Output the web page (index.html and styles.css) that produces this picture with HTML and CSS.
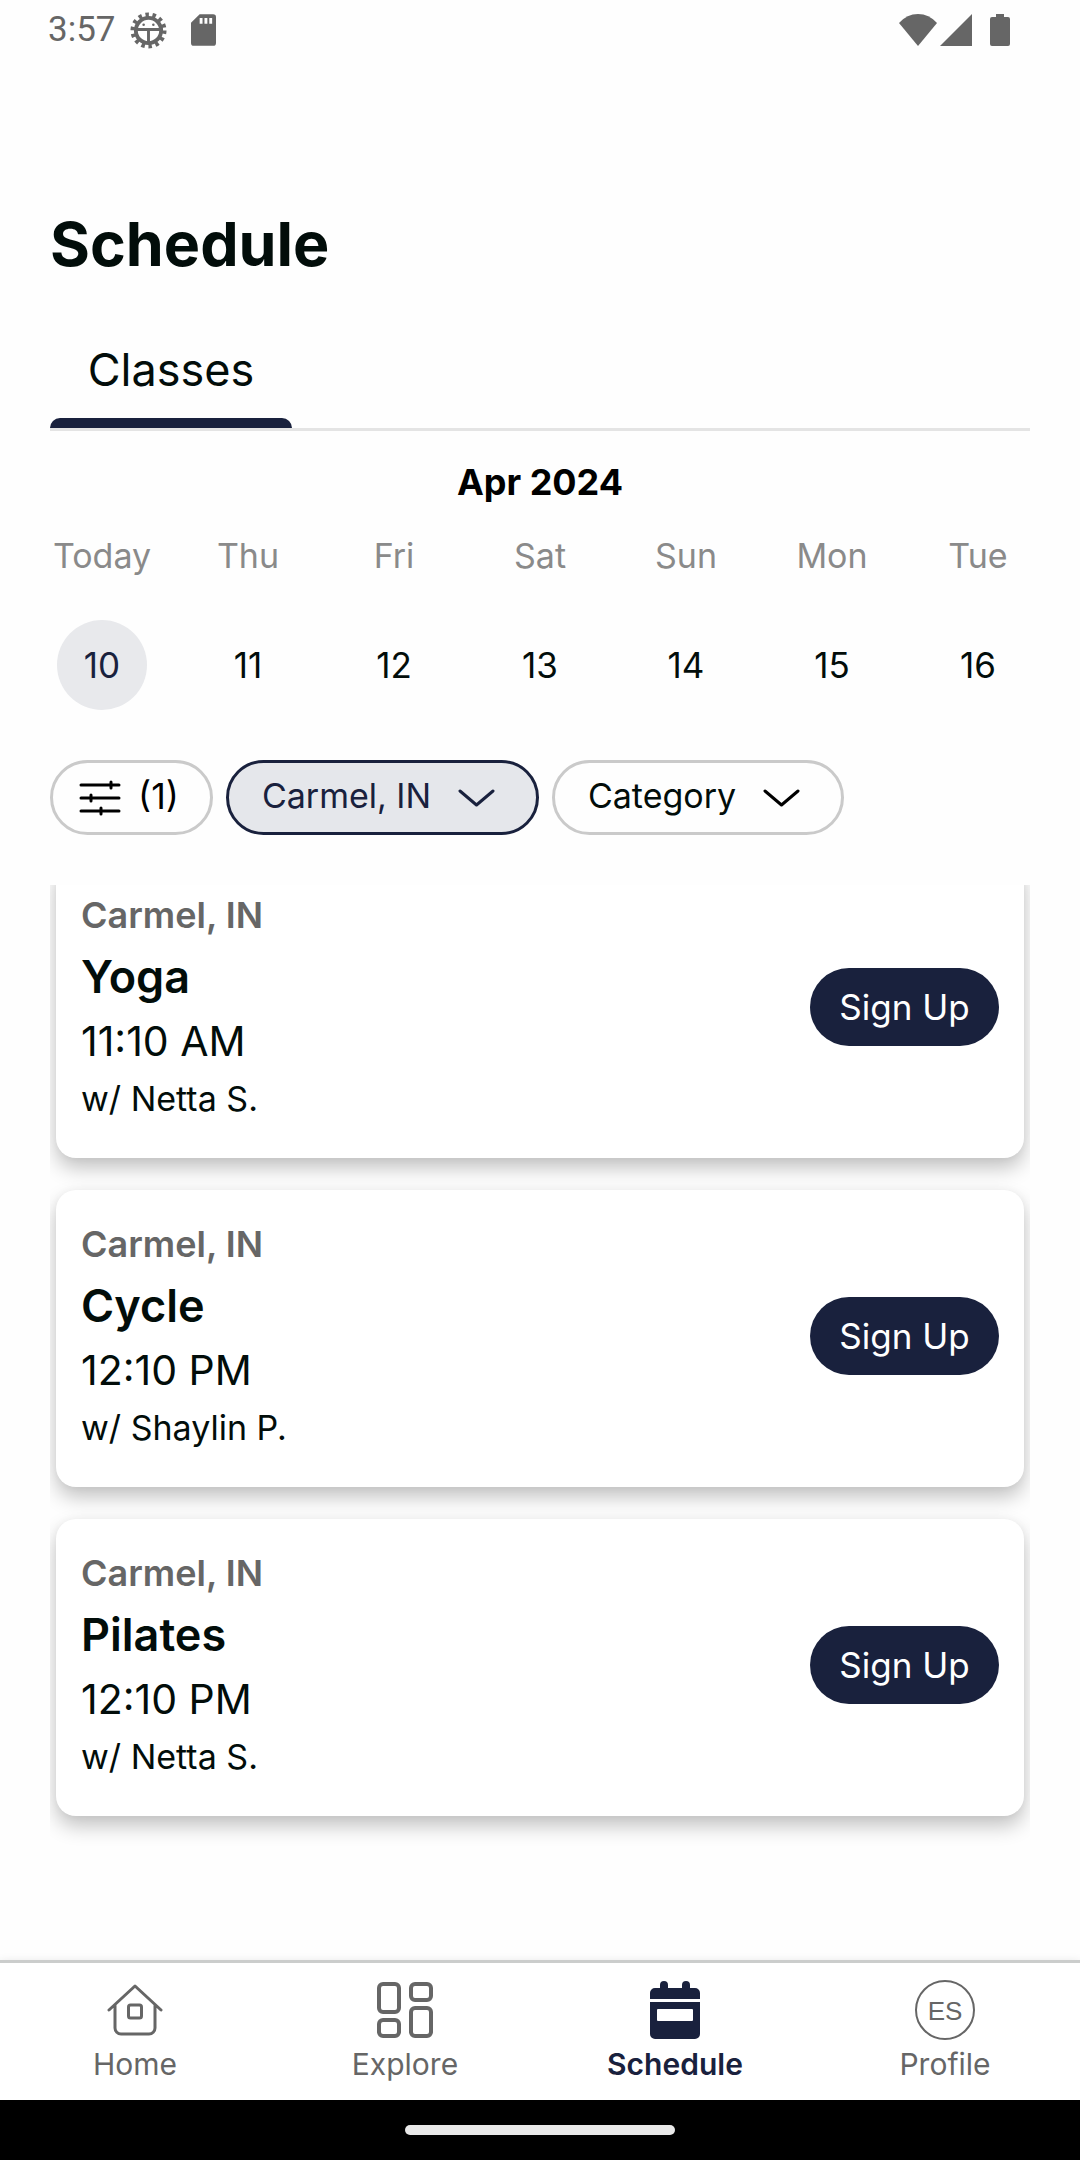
FILE: index.html
```html
<!DOCTYPE html>
<html lang="en">
<head>
    <meta charset="UTF-8">
    <meta name="viewport" content="width=device-width, initial-scale=1.0">
    <title>Schedule</title>
    <link rel="stylesheet" href="styles.css">
</head>
<body>
    <!-- Status bar -->
    <div class="status-bar">
        <span class="clock">3:57</span>
        <svg class="gear" viewBox="0 0 38 38" width="37" height="37">
            <circle cx="19" cy="19" r="13" fill="none" stroke="#666" stroke-width="4"/>
            <circle cx="19" cy="19" r="16" fill="none" stroke="#666" stroke-width="5" stroke-dasharray="3.500 3.680"/>
            <path d="M6 18h26M19 18v13" stroke="#666" stroke-width="3"/>
            <circle cx="14" cy="13" r="1.300" fill="#666"/>
            <circle cx="24" cy="13" r="1.300" fill="#666"/>
        </svg>
        <svg class="sd-card" viewBox="0 0 26 33" width="25" height="32">
            <path fill="#666" fill-rule="evenodd" d="M9 0h14a3 3 0 0 1 3 3v27a3 3 0 0 1-3 3H3a3 3 0 0 1-3-3V9zM9 4v6h3V4zM14 4v6h3V4zM19 4v6h3V4z"/>
        </svg>
        <div class="signals">
            <svg viewBox="0 0 40 32" width="40" height="32"><path fill="#666" d="M20 32 1 9Q9 0 20 0t19 9z"/></svg>
            <svg viewBox="0 0 32 32" width="32" height="32"><path fill="#666" d="M32 0v32H0z"/></svg>
            <svg class="battery" viewBox="0 0 20 32" width="20" height="32"><path fill="#666" d="M6 0h8v3h4a2 2 0 0 1 2 2v25a2 2 0 0 1-2 2H2a2 2 0 0 1-2-2V5a2 2 0 0 1 2-2h4z"/></svg>
        </div>
    </div>

    <main class="content">
        <h1>Schedule</h1>
        <div class="tabs">
            <button class="tab">Classes</button>
        </div>

        <!-- Week picker -->
        <h2 class="month">Apr 2024</h2>
        <div class="week">
            <button class="day selected"><span class="name">Today</span><span class="date">10</span></button>
            <button class="day"><span class="name">Thu</span><span class="date">11</span></button>
            <button class="day"><span class="name">Fri</span><span class="date">12</span></button>
            <button class="day"><span class="name">Sat</span><span class="date">13</span></button>
            <button class="day"><span class="name">Sun</span><span class="date">14</span></button>
            <button class="day"><span class="name">Mon</span><span class="date">15</span></button>
            <button class="day"><span class="name">Tue</span><span class="date">16</span></button>
        </div>

        <!-- Filters -->
        <div class="filters">
            <button class="chip filter-btn">
                <svg viewBox="0 0 42 36" width="42" height="36" fill="none" stroke="#000" stroke-width="3" stroke-linecap="round">
                    <path d="M2 5h38M2 18h38M2 31h38M32 2v6M12 15v6M22 28v6"/>
                </svg>
                <span class="count">(1)</span>
            </button>
            <label class="chip active">
                <select aria-label="Location"><option>Carmel, IN</option></select>
                <svg viewBox="0 0 37 18" width="37" height="18" fill="none" stroke="#19213d" stroke-width="3" stroke-linecap="round" stroke-linejoin="round"><path d="M2 2l16.500 14L35 2"/></svg>
            </label>
            <label class="chip">
                <select aria-label="Category"><option>Category</option></select>
                <svg viewBox="0 0 37 18" width="37" height="18" fill="none" stroke="#000" stroke-width="3" stroke-linecap="round" stroke-linejoin="round"><path d="M2 2l16.500 14L35 2"/></svg>
            </label>
        </div>

        <!-- Class list -->
        <div class="list-window">
            <div class="class-list">
                <div class="class-card">
                    <div class="info">
                        <p class="place">Carmel, IN</p>
                        <h3>Yoga</h3>
                        <p class="time">11:10 AM</p>
                        <p class="teacher">w/ Netta S.</p>
                    </div>
                    <button class="sign-up">Sign Up</button>
                </div>
                <div class="class-card">
                    <div class="info">
                        <p class="place">Carmel, IN</p>
                        <h3>Cycle</h3>
                        <p class="time">12:10 PM</p>
                        <p class="teacher">w/ Shaylin P.</p>
                    </div>
                    <button class="sign-up">Sign Up</button>
                </div>
                <div class="class-card">
                    <div class="info">
                        <p class="place">Carmel, IN</p>
                        <h3>Pilates</h3>
                        <p class="time">12:10 PM</p>
                        <p class="teacher">w/ Netta S.</p>
                    </div>
                    <button class="sign-up">Sign Up</button>
                </div>
            </div>
        </div>
    </main>

    <!-- Bottom navigation -->
    <nav class="bottom-nav">
        <a href="#">
            <svg viewBox="0 0 60 60" width="60" height="60" fill="none" stroke="#666" stroke-width="3" stroke-linecap="round" stroke-linejoin="round">
                <path d="M4 30 30 6l26 24M10 25v23a6 6 0 0 0 6 6h28a6 6 0 0 0 6-6V25"/>
                <rect x="23.500" y="25" width="13" height="13" rx="2"/>
            </svg>
            Home
        </a>
        <a href="#">
            <svg viewBox="0 0 60 60" width="60" height="60" fill="none" stroke="#666" stroke-width="4">
                <rect x="4" y="4" width="20" height="28" rx="4"/>
                <rect x="36" y="4" width="20" height="16" rx="4"/>
                <rect x="4" y="40" width="20" height="16" rx="4"/>
                <rect x="36" y="28" width="20" height="28" rx="4"/>
            </svg>
            Explore
        </a>
        <a href="#" class="current">
            <svg viewBox="0 0 60 60" width="60" height="60" fill="#19213d">
                <path d="M5 19v-6a5 5 0 0 1 5-5h5V5a4 4 0 0 1 8 0v3h14V5a4 4 0 0 1 8 0v3h5a5 5 0 0 1 5 5v6z"/>
                <path fill-rule="evenodd" d="M5 22h50v32a5 5 0 0 1-5 5H10a5 5 0 0 1-5-5zM13 29q-1 0-1 1v10q0 1 1 1h34q1 0 1-1v-10q0-1-1-1z"/>
            </svg>
            Schedule
        </a>
        <a href="#">
            <span class="avatar">ES</span>
            Profile
        </a>
    </nav>
    <div class="home-bar"><span class="handle"></span></div>
</body>
</html>
```

FILE: styles.css
```css
* {
    box-sizing: border-box;
}
body {
    display: flex;
    flex-direction: column;
    min-height: 100vh;
    margin: 0;
    background-color: #fefefe;
    color: #020d0a;
    font-family: Inter, 'Liberation Sans', sans-serif;
    font-size: 34px;
    line-height: 44px;
}
h1, h2, h3, p {
    margin: 0;
}
button, select {
    padding: 0;
    border: none;
    background: none;
    color: inherit;
    font: inherit;
    cursor: pointer;
}
svg {
    display: block;
    flex-shrink: 0;
}

/* Status bar */
.status-bar {
    display: flex;
    align-items: center;
    height: 60px;
    padding: 0 70px 0 48px;
    color: #666;
    font-family: Roboto, sans-serif;
    font-size: 35px;
}
.gear {
    margin-left: 14px;
}
.sd-card {
    margin-left: 24px;
}
.signals {
    display: flex;
    gap: 2px;
    margin-left: auto;
}
.battery {
    margin-left: 16px;
}

/* Main content */
.content {
    flex: 1;
    padding: 148px 50px 0;
}
h1 {
    font-size: 61px;
    line-height: 72px;
    font-weight: 700;
}
.tabs {
    margin-top: 60px;
    border-bottom: 3px solid #e4e4e4;
}
.tab {
    display: block;
    position: relative;
    width: 242px;
    height: 88px;
    padding-bottom: 28px;
    font-size: 45px;
    line-height: 60px;
}
.tab::after {
    content: "";
    position: absolute;
    left: 0;
    right: 0;
    bottom: 0;
    height: 10px;
    border-radius: 10px 10px 0 0;
    background-color: #19213d;
}

/* Week picker */
.month {
    margin-top: 29px;
    color: #000;
    font-size: 36px;
    font-weight: 700;
    line-height: 44px;
    text-align: center;
}
.week {
    display: flex;
    justify-content: space-between;
    margin-top: 30px;
}
.day {
    display: flex;
    flex-direction: column;
    align-items: center;
    gap: 42px;
    width: 104px;
}
.name {
    color: #8a8a8a;
}
.date {
    display: flex;
    align-items: center;
    justify-content: center;
    width: 90px;
    height: 90px;
    border-radius: 50%;
    font-size: 35px;
}
.selected .date {
    background-color: #e8e9ec;
    color: #19213d;
}

/* Filters */
.filters {
    display: flex;
    gap: 13px;
    margin-top: 50px;
}
.chip {
    display: flex;
    align-items: center;
    gap: 26px;
    height: 75px;
    padding: 0 41px 0 33px;
    border: 3px solid #cacaca;
    border-radius: 38px;
}
.chip select,
.count {
    appearance: none;
    outline: none;
    height: 44px;
    padding-bottom: 4px;
    line-height: 40px;
}
.chip.filter-btn {
    gap: 17px;
    padding: 0 31px 0 26px;
    border: 3px solid #cacaca;
    color: #000;
    font-size: 36px;
}
.chip.active {
    border-color: #19213d;
    background-color: #e5e7eb;
    color: #19213d;
}

/* Class list */
.list-window {
    margin-top: 50px;
    overflow: hidden;
}
.class-list {
    display: flex;
    flex-direction: column;
    gap: 32px;
    margin-top: -24px;
    padding: 0 6px 50px;
}
.class-card {
    display: flex;
    align-items: center;
    justify-content: space-between;
    padding: 32px 25px 37px;
    border-radius: 20px;
    background-color: #fff;
    box-shadow: 0 10px 20px rgba(0, 0, 0, 0.24), 0 0 8px rgba(0, 0, 0, 0.04);
}
.info {
    display: flex;
    flex-direction: column;
    gap: 12px;
}
.place {
    color: #666;
    font-size: 36px;
    font-weight: 600;
}
.info h3 {
    font-size: 45px;
    line-height: 56px;
    font-weight: 600;
}
.time {
    font-size: 41px;
    line-height: 48px;
}
.sign-up {
    width: 189px;
    height: 78px;
    border-radius: 39px;
    background-color: #19213d;
    color: #fff;
    font-size: 35px;
}

/* Bottom navigation */
.bottom-nav {
    display: grid;
    grid-template-columns: repeat(4, 1fr);
    height: 140px;
    padding-top: 17px;
    border-top: 3px solid #cbcdcc;
    background-color: #fff;
    box-shadow: 0 0 8px rgba(0, 0, 0, 0.08);
}
.bottom-nav a {
    display: flex;
    flex-direction: column;
    align-items: center;
    gap: 6px;
    color: #666;
    font-size: 30px;
    line-height: 36px;
    text-decoration: none;
}
.bottom-nav .current {
    color: #19213d;
    font-weight: 600;
}
.avatar {
    width: 60px;
    height: 60px;
    border: 2px solid #666;
    border-radius: 50%;
    font-family: 'Liberation Sans', sans-serif;
    font-size: 26px;
    line-height: 58px;
    text-align: center;
}
.home-bar {
    display: flex;
    align-items: center;
    justify-content: center;
    height: 60px;
    background-color: #000;
}
.handle {
    width: 25%;
    height: 10px;
    border-radius: 5px;
    background-color: #e9e9e9;
}
```
